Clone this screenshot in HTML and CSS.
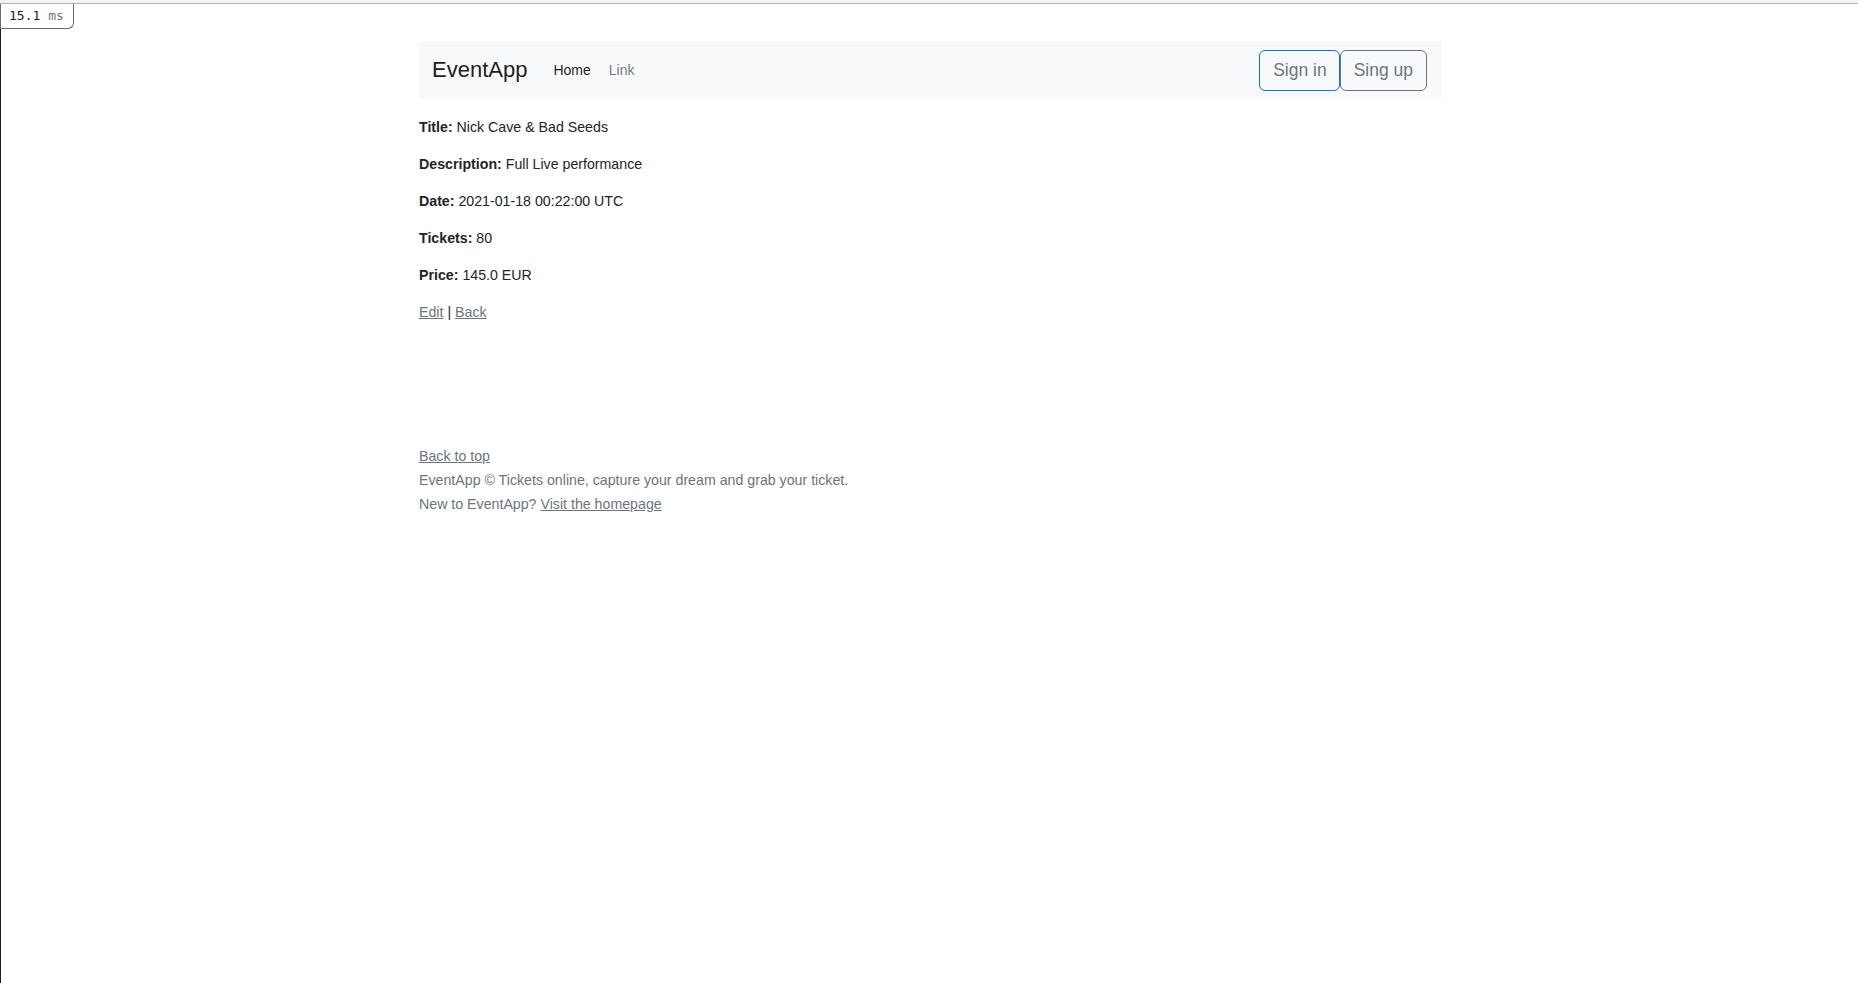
FILE: index.html
```html
<!DOCTYPE html>
<html lang="en">
<head>
<meta charset="utf-8">
<title>EventApp</title>
<link rel="stylesheet" href="styles.css">
</head>
<body>
<div class="topline"></div>
<div class="leftline"></div>
<div class="profiler"><span class="ms-num">15.1</span> <span class="ms-unit">ms</span></div>

<div class="container">
  <nav class="navbar">
    <div class="nav-left">
      <a class="brand" href="#">EventApp</a>
      <a class="nav-link active" href="#">Home</a>
      <a class="nav-link" href="#">Link</a>
    </div>
    <div class="nav-right">
      <a class="btn btn-focus" href="#">Sign in</a><a class="btn" href="#">Sing up</a>
    </div>
  </nav>

  <main class="details">
    <p><strong>Title:</strong> Nick Cave &amp; Bad Seeds</p>
    <p><strong>Description:</strong> Full Live performance</p>
    <p><strong>Date:</strong> 2021-01-18 00:22:00 UTC</p>
    <p><strong>Tickets:</strong> 80</p>
    <p><strong>Price:</strong> 145.0 EUR</p>
    <p><a href="#">Edit</a> | <a href="#">Back</a></p>
  </main>

  <footer class="footer">
    <p><a href="#">Back to top</a></p>
    <p>EventApp © Tickets online, capture your dream and grab your ticket.</p>
    <p>New to EventApp? <a href="#">Visit the homepage</a></p>
  </footer>
</div>
</body>
</html>
```
FILE: styles.css
```css
html, body {
  margin: 0;
  padding: 0;
  background: #fff;
}
body {
  font-family: "Liberation Sans", Arial, sans-serif;
  font-size: 14.2px;
  line-height: 21px;
  color: #212529;
}

.topline {
  position: fixed;
  top: 0;
  left: 0;
  right: 0;
  height: 3px;
  background: #f2f2f2;
  border-bottom: 1px solid #b4b4b4;
  z-index: 5;
}
.leftline {
  position: fixed;
  top: 4px;
  left: 0;
  bottom: 0;
  width: 1px;
  background: #1c1c1c;
  z-index: 5;
}
.profiler {
  position: fixed;
  top: 4px;
  left: 0;
  box-sizing: border-box;
  height: 25px;
  padding: 3px 9px 0 8px;
  background: #fff;
  border: 1px solid #6b6b6b;
  border-top: none;
  border-bottom-right-radius: 6px;
  font-family: "DejaVu Sans Mono", monospace;
  font-size: 13px;
  line-height: 18px;
  z-index: 6;
}
.ms-num { color: #222; }
.ms-unit { color: #777; }

.container {
  width: 1022px;
  margin-left: calc(50% - 510px);
  padding-top: 41px;
}

.navbar {
  height: 58px;
  background: #f8f9fa;
  display: flex;
  align-items: center;
  justify-content: space-between;
  padding: 0 14px 0 13px;
}
.nav-left {
  display: flex;
  align-items: center;
}
.brand {
  font-size: 22px;
  line-height: 30px;
  color: rgba(0, 0, 0, 0.9);
  text-decoration: none;
  margin-right: 17px;
}
.nav-link {
  font-size: 14px;
  color: rgba(0, 0, 0, 0.55);
  text-decoration: none;
  padding: 0 9px;
}
.nav-link.active {
  color: rgba(0, 0, 0, 0.9);
}
.nav-right {
  display: flex;
  align-items: center;
}
.btn {
  display: inline-block;
  font-size: 17.5px;
  line-height: 25px;
  padding: 7px 13px;
  color: #6c757d;
  border: 1px solid #6c757d;
  border-radius: 6px;
  text-decoration: none;
}
.btn-focus {
  border-color: #0d6efd;
  padding: 7px 12px 7px 13px;
}

.details {
  margin-top: 18px;
}
.details p {
  margin: 0 0 16px 0;
}
.details strong {
  font-weight: bold;
}
.details a {
  color: #6c757d;
}

.footer {
  margin-top: 121px;
  color: #6c757d;
}
.footer p {
  margin: 0;
  line-height: 24px;
}
.footer a {
  color: #6c757d;
}
```
